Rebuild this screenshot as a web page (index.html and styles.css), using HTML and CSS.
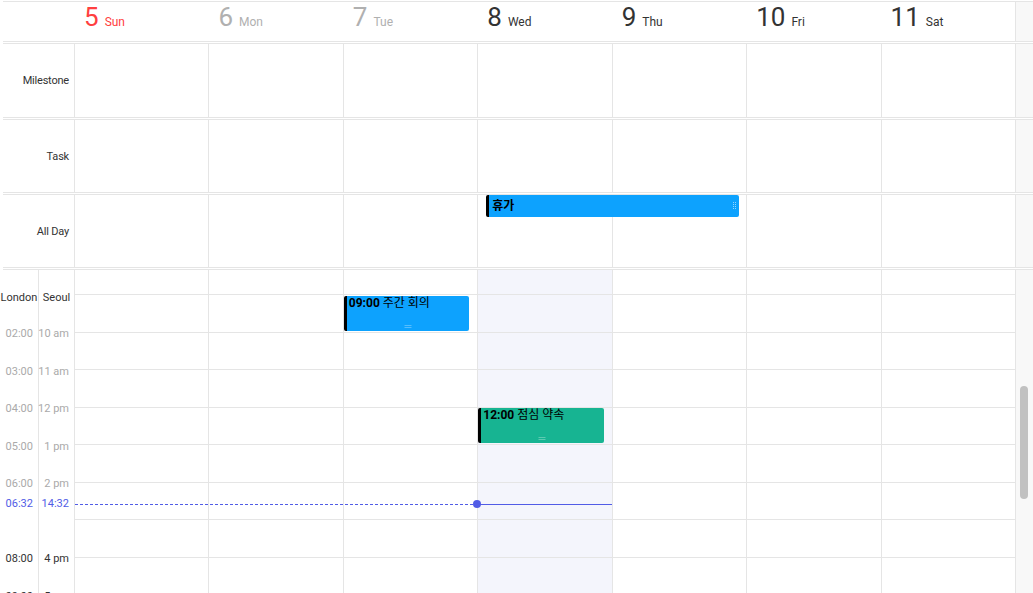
FILE: index.html
```html
<!DOCTYPE html>
<html lang="ko">
<head>
<meta charset="utf-8">
<title>Week</title>
<link rel="stylesheet" href="styles.css">
</head>
<body>
<div class="cal">
  <div class="topline"></div>
  <div class="row daynames">
    <div class="gut"></div>
    <div class="dn sun"><span class="num">5</span><span class="nm">Sun</span></div>
    <div class="dn past"><span class="num">6</span><span class="nm">Mon</span></div>
    <div class="dn past"><span class="num">7</span><span class="nm">Tue</span></div>
    <div class="dn today"><span class="num">8</span><span class="nm">Wed</span></div>
    <div class="dn"><span class="num">9</span><span class="nm">Thu</span></div>
    <div class="dn"><span class="num">10</span><span class="nm">Fri</span></div>
    <div class="dn"><span class="num">11</span><span class="nm">Sat</span></div>
    <div class="strip"></div>
  </div>
  <div class="splitter"></div>
  <div class="row p-ms">
    <div class="label">Milestone</div>
    <div class="cell"></div><div class="cell"></div><div class="cell"></div><div class="cell"></div><div class="cell"></div><div class="cell"></div><div class="cell"></div>
    <div class="strip"></div>
  </div>
  <div class="splitter"></div>
  <div class="row p-task">
    <div class="label">Task</div>
    <div class="cell"></div><div class="cell"></div><div class="cell"></div><div class="cell"></div><div class="cell"></div><div class="cell"></div><div class="cell"></div>
    <div class="strip"></div>
  </div>
  <div class="splitter"></div>
  <div class="row p-allday">
    <div class="label">All Day</div>
    <div class="cell"></div><div class="cell"></div><div class="cell"></div><div class="cell"></div><div class="cell"></div><div class="cell"></div><div class="cell"></div>
    <div class="strip"></div>
    <div class="ev-ad"><span class="ev-title">휴가</span>
      <svg class="grip-r" width="4" height="8" viewBox="0 0 4 8"><g fill="#ffffff" fill-opacity="0.55"><rect x="0" y="0" width="1" height="1"/><rect x="2" y="0" width="1" height="1"/><rect x="0" y="2" width="1" height="1"/><rect x="2" y="2" width="1" height="1"/><rect x="0" y="4" width="1" height="1"/><rect x="2" y="4" width="1" height="1"/><rect x="0" y="6" width="1" height="1"/><rect x="2" y="6" width="1" height="1"/></g></svg>
    </div>
  </div>
  <div class="splitter"></div>
  <div class="row timegrid">
    <div class="tgut">
      <div class="tz">
        <div class="tzh">London</div>
        <div class="tl">02:00</div>
        <div class="tl">03:00</div>
        <div class="tl">04:00</div>
        <div class="tl">05:00</div>
        <div class="tl">06:00</div>
        <div class="tl"></div>
        <div class="tl fut">08:00</div>
        <div class="tl fut">09:00</div>
      </div>
      <div class="tz tz2">
        <div class="tzh">Seoul</div>
        <div class="tl">10 am</div>
        <div class="tl">11 am</div>
        <div class="tl">12 pm</div>
        <div class="tl">1 pm</div>
        <div class="tl">2 pm</div>
        <div class="tl"></div>
        <div class="tl fut">4 pm</div>
        <div class="tl fut">5 pm</div>
      </div>
    </div>
    <div class="tcol"><div class="h0"></div><div class="h"></div><div class="h"></div><div class="h"></div><div class="h"></div><div class="h"></div><div class="h"></div><div class="h"></div><div class="h"></div><div class="h"></div></div>
    <div class="tcol"><div class="h0"></div><div class="h"></div><div class="h"></div><div class="h"></div><div class="h"></div><div class="h"></div><div class="h"></div><div class="h"></div><div class="h"></div><div class="h"></div></div>
    <div class="tcol"><div class="h0"></div><div class="h"></div><div class="h"></div><div class="h"></div><div class="h"></div><div class="h"></div><div class="h"></div><div class="h"></div><div class="h"></div><div class="h"></div>
      <div class="ev blue ev-tue"><b>09:00</b> 주간 회의
        <svg class="grip-b" width="7" height="3" viewBox="0 0 7 3"><g fill="#ffffff" fill-opacity="0.6"><rect x="0" y="0" width="1" height="1"/><rect x="2" y="0" width="1" height="1"/><rect x="4" y="0" width="1" height="1"/><rect x="6" y="0" width="1" height="1"/><rect x="0" y="2" width="1" height="1"/><rect x="2" y="2" width="1" height="1"/><rect x="4" y="2" width="1" height="1"/><rect x="6" y="2" width="1" height="1"/></g></svg>
      </div>
    </div>
    <div class="tcol today"><div class="h0"></div><div class="h"></div><div class="h"></div><div class="h"></div><div class="h"></div><div class="h"></div><div class="h"></div><div class="h"></div><div class="h"></div><div class="h"></div>
      <div class="ev green ev-wed"><b>12:00</b> 점심 약속
        <svg class="grip-b" width="7" height="3" viewBox="0 0 7 3"><g fill="#ffffff" fill-opacity="0.6"><rect x="0" y="0" width="1" height="1"/><rect x="2" y="0" width="1" height="1"/><rect x="4" y="0" width="1" height="1"/><rect x="6" y="0" width="1" height="1"/><rect x="0" y="2" width="1" height="1"/><rect x="2" y="2" width="1" height="1"/><rect x="4" y="2" width="1" height="1"/><rect x="6" y="2" width="1" height="1"/></g></svg>
      </div>
    </div>
    <div class="tcol"><div class="h0"></div><div class="h"></div><div class="h"></div><div class="h"></div><div class="h"></div><div class="h"></div><div class="h"></div><div class="h"></div><div class="h"></div><div class="h"></div></div>
    <div class="tcol"><div class="h0"></div><div class="h"></div><div class="h"></div><div class="h"></div><div class="h"></div><div class="h"></div><div class="h"></div><div class="h"></div><div class="h"></div><div class="h"></div></div>
    <div class="tcol"><div class="h0"></div><div class="h"></div><div class="h"></div><div class="h"></div><div class="h"></div><div class="h"></div><div class="h"></div><div class="h"></div><div class="h"></div><div class="h"></div></div>
    <div class="strip"><div class="thumb"></div></div>
    <div class="now-dash"></div>
    <div class="now-solid"><span class="now-dot"></span></div>
    <div class="now-label"><span class="nl1">06:32</span><span class="nl2">14:32</span></div>
  </div>
</div>
</body>
</html>
```

FILE: styles.css
```css
* { box-sizing: border-box; }
html, body { margin: 0; padding: 0; background: #fff; }
body {
  font-family: Roboto, "Noto Sans CJK KR", sans-serif;
  color: #333;
  overflow: hidden;
}
.cal {
  width: 1033px;
  height: 593px;
  display: flex;
  flex-direction: column;
  overflow: hidden;
}
.topline {
  flex: none;
  height: 1px;
  margin: 1px 0 0 3px;
  background: #e5e5e5;
}
.row {
  flex: none;
  display: grid;
  grid-template-columns: 74px repeat(7, 1fr) 18px;
  position: relative;
}
.strip {
  border-left: 1px solid #e5e5e5;
  background: #f8f8f8;
}
.daynames { height: 39px; }
.dn {
  display: flex;
  align-items: baseline;
  padding-left: 10px;
  color: #333;
  white-space: nowrap;
}
.dn .num { font-size: 26px; line-height: 31px; }
.dn .nm { font-size: 12px; margin-left: 6px; }
.dn.sun { color: #ff4040; }
.dn.past { color: #b0b0b0; }
.splitter {
  flex: none;
  height: 3px;
  margin-left: 3px;
  border-top: 1px solid #e5e5e5;
  border-bottom: 1px solid #e5e5e5;
}
.p-ms { height: 73px; }
.p-task, .p-allday { height: 72px; }
.label {
  display: flex;
  align-items: center;
  justify-content: flex-end;
  padding-right: 5px;
  font-size: 11px;
  letter-spacing: -0.2px;
  color: #333;
}
.cell { border-left: 1px solid #e5e5e5; }

.ev-ad {
  position: absolute;
  grid-column: 5 / 7;
  grid-row: 1;
  top: 0;
  left: 9px;
  right: 7px;
  height: 22px;
  display: flex;
  align-items: center;
  background: #0da2fe;
  border-left: 3px solid #000;
  border-radius: 2px;
  padding-left: 3px;
  padding-bottom: 3px;
  color: #000;
  font-size: 12px;
  font-weight: 700;
}
.ev-ad .ev-title { flex: 1; }
.grip-r { display: block; margin-right: 2px; margin-top: 2px; }

.timegrid {
  flex: 1 1 auto;
  min-height: 0;
  overflow: hidden;
}
.tgut { display: flex; }
.tz {
  width: 39px;
  border-right: 1px solid #e5e5e5;
  display: flex;
  flex-direction: column;
}
.tz2 { width: 35px; border-right: none; }
.tzh {
  flex: none;
  height: 44.8px;
  padding-top: 22px;
  line-height: 12px;
  font-size: 11px;
  text-align: center;
  color: #333;
  white-space: nowrap;
}
.tl {
  flex: none;
  height: 37.57px;
  display: flex;
  align-items: center;
  justify-content: flex-end;
  padding-right: 5px;
  font-size: 11px;
  color: #aaa;
  white-space: nowrap;
}
.tl.fut { color: #333; }
.tcol {
  position: relative;
  border-left: 1px solid #e5e5e5;
  display: flex;
  flex-direction: column;
}
.tcol.today { background: #f4f5fc; }
.h0 { flex: none; height: 24px; }
.h { flex: none; height: 37.57px; border-top: 1px solid #e5e5e5; }
.thumb {
  width: 8px;
  height: 113px;
  margin: 116px 0 0 4px;
  background: #c1c1c1;
  border-radius: 4px;
}

.ev {
  position: absolute;
  border-left: 3px solid #000;
  border-radius: 2px;
  padding-left: 2px;
  padding-top: 1px;
  color: #000;
  font-size: 12px;
  line-height: 13px;
  white-space: nowrap;
  overflow: hidden;
}
.ev b { font-weight: 700; }
.ev.blue { background: #0da2fe; }
.ev.green { background: #17b492; }
.ev-tue { top: 26px; left: 0; right: 8px; height: 35px; }
.ev-wed { top: 138px; left: 0; right: 8px; height: 35px; }
.grip-b {
  position: absolute;
  bottom: 3px;
  left: 50%;
  transform: translateX(-50%);
  display: block;
}

.now-dash {
  position: absolute;
  grid-column: 2 / 5;
  grid-row: 1;
  top: 234px;
  left: 1px;
  right: 0;
  height: 1px;
  background: repeating-linear-gradient(to right, #515ce6 0 3px, transparent 3px 5px);
}
.now-solid {
  position: absolute;
  grid-column: 5 / 6;
  grid-row: 1;
  top: 234px;
  left: 0;
  right: 0;
  height: 1px;
  background: #515ce6;
}
.now-dot {
  position: absolute;
  left: -4px;
  top: -4px;
  width: 8px;
  height: 8px;
  border-radius: 50%;
  background: #515ce6;
}
.now-label {
  position: absolute;
  grid-column: 1 / 2;
  grid-row: 1;
  top: 227px;
  left: 0;
  right: 0;
  display: flex;
  font-size: 11px;
  line-height: 14px;
  color: #515ce6;
}
.now-label .nl1 { width: 39px; text-align: right; padding-right: 6px; }
.now-label .nl2 { width: 35px; text-align: right; padding-right: 5px; }
```
